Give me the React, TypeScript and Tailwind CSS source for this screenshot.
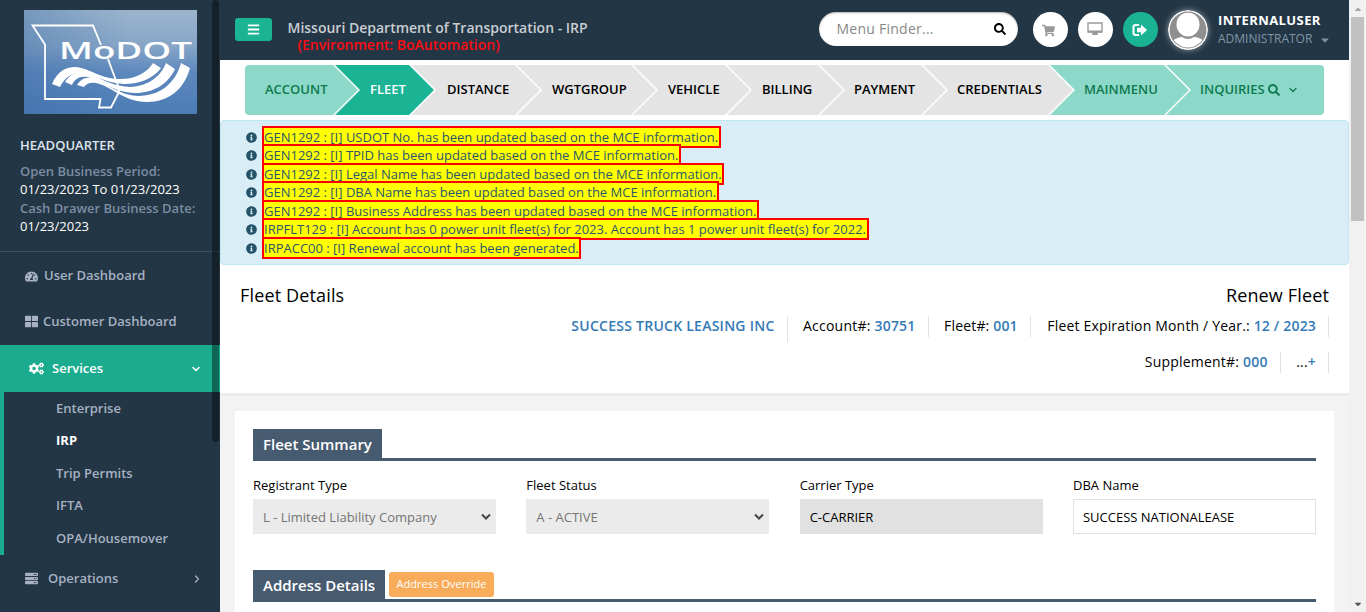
import React from "react";
import { FaTachometerAlt, FaThLarge, FaCogs, FaServer, FaBars, FaSearch, FaShoppingCart, FaInfoCircle, FaCaretDown, FaCaretUp } from "react-icons/fa";
import { ChevronDown, ChevronRight } from "lucide-react";

const steps = [
  { label: "ACCOUNT", w: "w-[113px]", tone: "bg-[#8dd9c9] text-[#0d7a4f]", pad: "pl-5", first: true },
  { label: "FLEET", w: "w-[99px]", tone: "bg-[#1ab394] text-white font-bold", pad: "pl-[35px]" },
  { label: "DISTANCE", w: "w-[129px]", tone: "bg-[#e4e4e4] text-black", pad: "pl-[36px]" },
  { label: "WGTGROUP", w: "w-[139px]", tone: "bg-[#e4e4e4] text-black", pad: "pl-[35px]" },
  { label: "VEHICLE", w: "w-[117px]", tone: "bg-[#e4e4e4] text-black", pad: "pl-[35px]" },
  { label: "BILLING", w: "w-[116px]", tone: "bg-[#e4e4e4] text-black", pad: "pl-[35px]" },
  { label: "PAYMENT", w: "w-[126px]", tone: "bg-[#e4e4e4] text-black", pad: "pl-[34px]" },
  { label: "CREDENTIALS", w: "w-[150px]", tone: "bg-[#e4e4e4] text-black", pad: "pl-[34px]" },
  { label: "MAINMENU", w: "w-[139px]", tone: "bg-[#8dd9c9] text-[#0d7a4f]", pad: "pl-[34px]" },
  { label: "INQUIRIES", w: "w-[158px]", tone: "bg-[#8dd9c9] text-[#0d7a4f]", pad: "pl-[34px]", last: true },
];

const messages = [
  { text: "GEN1292 : [I] USDOT No. has been updated based on the MCE information.", w: "w-[459px]" },
  { text: "GEN1292 : [I] TPID has been updated based on the MCE information.", w: "w-[419px]" },
  { text: "GEN1292 : [I] Legal Name has been updated based on the MCE information.", w: "w-[462px]" },
  { text: "GEN1292 : [I] DBA Name has been updated based on the MCE information.", w: "w-[457px]" },
  { text: "GEN1292 : [I] Business Address has been updated based on the MCE information.", w: "w-[497px]" },
  { text: "IRPFLT129 : [I] Account has 0 power unit fleet(s) for 2023. Account has 1 power unit fleet(s) for 2022.", w: "w-[607px]" },
  { text: "IRPACC00 : [I] Renewal account has been generated.", w: "w-[319px]" },
];

function Logo() {
  return (
    <svg width="173" height="104" viewBox="0 0 173 104" className="block">
      <defs>
        <linearGradient id="sky" x1="0" y1="0" x2="0" y2="1">
          <stop offset="0" stopColor="#9cb5cd" />
          <stop offset="0.35" stopColor="#86a5c7" />
          <stop offset="0.6" stopColor="#5d88bd" />
          <stop offset="1" stopColor="#4c7cb6" />
        </linearGradient>
        <linearGradient id="shade" x1="0" y1="0" x2="1" y2="0">
          <stop offset="0" stopColor="#3c6ca5" stopOpacity="0.4" />
          <stop offset="0.6" stopColor="#3c6ca5" stopOpacity="0" />
        </linearGradient>
      </defs>
      <rect width="173" height="104" fill="url(#sky)" />
      <rect width="173" height="104" fill="url(#shade)" />
      <path d="M77 35 L69 15.500 H8.500 L21 34.500 V89 H76.500 L75 97.500 H87 L95 82 L94 76 L84 49" fill="none" stroke="#fff" strokeWidth="1.800" />
      <g fill="#fff">
        <path d="M28 74 C34 60 43 57 51 57 C66 58 76 69 96 69 C114 69 124 61 129 53 L137 58 C128 70 114 74 100 74 C80 73 70 64 57 63 C46 63 40 69 36 77 Z" />
        <path d="M41 72 C46 64 52 61 62 63 C76 67 86 76 106 77 C125 76 137 66 142 53 L151 59 C144 74 130 83 111 83 C89 82 78 71 63 67 C55 66 51 69 48 75 Z" />
        <path d="M53 75 C57 69 62 66 70 69 C84 74 95 85 114 86 C137 86 152 72 157 53 L166 58 C160 80 144 92 123 92 C100 92 87 76 72 73 C66 72 62 74 60 77 Z" />
      </g>
      <text x="35" y="49" fontFamily="Open Sans, sans-serif" fontSize="24" fill="#fff" textLength="133" lengthAdjust="spacingAndGlyphs">MoDOT</text>
    </svg>
  );
}

function Step({ s }: { s: (typeof steps)[number] }) {
  const shape = s.first
    ? "rounded-l-[4px] [clip-path:polygon(0_0,calc(100%-25px)_0,100%_50%,calc(100%-25px)_100%,0_100%)]"
    : s.last
      ? "-ml-[23px] rounded-r-[4px] [clip-path:polygon(0_0,100%_0,100%_100%,0_100%,25px_50%)]"
      : "-ml-[23px] [clip-path:polygon(0_0,calc(100%-25px)_0,100%_50%,calc(100%-25px)_100%,0_100%,25px_50%)]";
  return (
    <div className={`flex h-[50px] shrink-0 items-center whitespace-nowrap text-[13px] font-semibold ${s.w} ${s.tone} ${s.pad} ${shape}`}>
      {s.label}
      {s.last && <><FaSearch className="ml-[3px] size-3" /><ChevronDown className="ml-[7px] size-3" strokeWidth={2.5} /></>}
    </div>
  );
}

function Select({ label, value }: { label: string; value: string }) {
  return (
    <div>
      <div className="h-[28px] leading-[28px]">{label}</div>
      <div className="flex h-[35px] items-center justify-between bg-[#ebebeb] pr-[5px] pl-[10px] text-[#757575]">
        <span className="pt-[2px]">{value}</span>
        <svg width="10" height="8" viewBox="0 0 10 8"><path d="M1 1.500 L5 5.500 L9 1.500" fill="none" stroke="#444" strokeWidth="2" /></svg>
      </div>
    </div>
  );
}

function Sidebar() {
  return (
    <aside className="relative h-[612px] w-[220px] shrink-0 overflow-hidden bg-[#233645] text-[13px] font-semibold text-[#a7b1c2]">
      <div className="h-[251px] pt-[10px]">
        <div className="pl-6"><Logo /></div>
        <div className="pt-[21px] pl-5 whitespace-nowrap">
          <div className="h-[26px] leading-[20px] text-[#dfe4ed]">HEADQUARTER</div>
          <div className="h-[18px] leading-[20px] text-[#7c8da4]">Open Business Period:</div>
          <div className="h-[19px] leading-[21px] font-medium text-white">01/23/2023 To 01/23/2023</div>
          <div className="h-[18px] leading-[21px] text-[#7c8da4]">Cash Drawer Business Date:</div>
          <div className="h-[19px] leading-[21px] font-medium text-white">01/23/2023</div>
        </div>
      </div>
      <div className="flex h-[47px] items-center border-t border-[#3b4e5d] pt-[2px] pl-[25px]"><FaTachometerAlt className="size-[13px]" /><span className="ml-[6px]">User Dashboard</span></div>
      <div className="flex h-[47px] items-center pl-[25px]"><FaThLarge className="size-[13px]" /><span className="ml-[5px]">Customer Dashboard</span></div>
      <div className="flex h-[47px] items-center bg-[#1bab8e] pr-[18px] pl-[29px] text-white"><FaCogs className="size-[15px]" /><span className="ml-2 grow">Services</span><ChevronDown className="size-3" strokeWidth={3} /></div>
      <div className="h-[163px] border-l-4 border-[#1bab8e] pl-[52px]">
        <div className="h-[32px] leading-[32px]">Enterprise</div>
        <div className="h-[33px] leading-[32px] font-bold text-white">IRP</div>
        <div className="h-[32px] leading-[32px]">Trip Permits</div>
        <div className="h-[33px] leading-[32px]">IFTA</div>
        <div className="h-[33px] leading-[32px]">OPA/Housemover</div>
      </div>
      <div className="flex h-[47px] items-center pr-[17px] pl-[25px]"><FaServer className="size-[13px]" /><span className="ml-[10px] grow">Operations</span><ChevronRight className="size-3" strokeWidth={2.5} /></div>
      <div className="absolute top-0 left-[212px] h-[442px] w-[7px] rounded-[4px] bg-black/40" />
    </aside>
  );
}

function Header() {
  return (
    <header className="flex h-[60px] bg-[#233645]">
      <div className="mt-[18px] ml-[15px] flex h-[23px] w-[37px] items-center justify-center rounded-[3px] bg-[#1ab394] text-white"><FaBars className="size-[13px]" /></div>
      <div className="mt-[19px] ml-[15.500px] w-[531px] text-[14px] leading-[17px] font-semibold whitespace-nowrap text-[#c9cdd1]">
        <div>Missouri Department of Transportation - IRP</div>
        <div className="pl-[10px] text-[#fb0b12]">(Environment: BoAutomation)</div>
      </div>
      <div className="mt-3 flex h-[34px] w-[199px] items-center justify-between rounded-full bg-white pr-3 pl-[18px] text-[14px] text-[#888] shadow-[inset_0_1px_2px_rgba(0,0,0,0.3)]"><span className="pb-px tracking-[0.25px]">Menu Finder...</span><FaSearch className="size-[12px] text-black" /></div>
      <div className="mt-3 ml-[15px] flex size-[35px] items-center justify-center rounded-full bg-white text-[#999]"><FaShoppingCart className="mr-[3px] mt-px size-[13px]" /></div>
      <div className="mt-3 ml-[10px] flex size-[35px] items-center justify-center rounded-full bg-white">
        <svg className="mb-px" width="16" height="14" viewBox="0 0 16 14"><path d="M1 1h14v9H1z" fill="none" stroke="#999" strokeWidth="1.400" /><path d="M1 8.500h14v2H1zM6 10h4l1 3H5z" fill="#999" /></svg>
      </div>
      <div className="mt-3 ml-[10px] flex size-[35px] items-center justify-center rounded-full bg-[#1ab394]">
        <svg width="16" height="14" viewBox="0 0 16 14"><path d="M7 2H3.500Q1.500 2 1.500 4v6q0 2 2 2H7" fill="none" stroke="#fff" strokeWidth="2" /><path d="M5 4.800h4V1.500L15 7 9 12.500V9.200H5z" fill="#fff" /></svg>
      </div>
      <svg className="mt-[10px] ml-[10px] rounded-full shadow-[0_0_6px_rgba(255,255,255,0.5)]" width="40" height="40" viewBox="0 0 40 40">
        <defs><clipPath id="face"><circle cx="20" cy="20" r="17.500" /></clipPath></defs>
        <circle cx="20" cy="20" r="20" fill="#fff" /><circle cx="20" cy="20" r="18.500" fill="#8f8f8f" />
        <g clipPath="url(#face)" fill="#fff"><ellipse cx="20" cy="14.500" rx="11.500" ry="12" /><path d="M4 40V31q6-4 10-4 6 4 12 0 5 0 10 4v9z" /></g>
      </svg>
      <div className="ml-[10.500px] pt-[10px] text-[13px] leading-[19px] whitespace-nowrap">
        <div className="pt-px leading-[18px] font-bold tracking-[0.4px] text-white">INTERNALUSER</div>
        <div className="flex items-center text-[12px] text-[#8095a8]">ADMINISTRATOR<FaCaretDown className="mt-[3px] ml-[7px] size-3" /></div>
      </div>
    </header>
  );
}

export default function App() {
  return (
    <div className="flex h-[612px] w-[1366px] overflow-hidden bg-[#f3f3f4] font-['Open_Sans',sans-serif]">
      <Sidebar />
      <main className="h-[612px] w-[1129px] shrink-0 overflow-hidden">
        <Header />
        <div className="h-[336px] border-b-[3px] border-[#ececec] bg-white">
          <nav className="flex h-[60px] pt-[5px] pl-[25px]">{steps.map((s) => <Step key={s.label} s={s} />)}</nav>
          <section className="h-[145px] rounded-[4px] border border-[#bce8f1] bg-[#d9edf7] pt-[5px] pl-[25px] text-[13px] text-[#2b566e]">
            {messages.map((m) => (
              <div key={m.text} className="flex h-[18.450px] items-start">
                <FaInfoCircle className="mt-[6px] mr-[5px] size-[11px] shrink-0 text-[#245269]" />
                <span className={`relative h-[22px] shrink-0 border-2 border-[#f00] bg-[#ff0] leading-[19px] font-normal whitespace-nowrap ${m.w}`}>{m.text}</span>
              </div>
            ))}
          </section>
          <div className="flex h-[50px] items-end justify-between px-5 pb-[8px] text-[18px] leading-[24px] font-medium tracking-[0.15px] text-black"><h1>Fleet Details</h1><h2>Renew Fleet</h2></div>
          <div className="flex h-[36px] justify-end pr-5 text-[14px] leading-[19px] tracking-[0.2px] whitespace-nowrap text-black">
            <div className="mt-[2px] h-[25px] border-r border-[#e1e1e1] pr-[12.500px] leading-[17px] font-semibold tracking-[0.25px] text-[#337ab7]">SUCCESS TRUCK LEASING INC</div>
            <div className="mt-px h-[21px] border-r border-[#e1e1e1] pr-[12.500px] pl-[15px] tracking-[0.22px]">Account#: <b className="font-semibold text-[#337ab7]">30751</b></div>
            <div className="mt-px h-[21px] border-r border-[#e1e1e1] pr-[12.500px] pl-[15px] tracking-[0.17px]">Fleet#: <b className="font-semibold text-[#337ab7]">001</b></div>
            <div className="mt-px h-[21px] border-r border-[#e1e1e1] pr-[12px] pl-[16px] tracking-[0.175px]">Fleet Expiration Month / Year.: <b className="font-semibold text-[#337ab7]">12 / 2023</b></div>
          </div>
          <div className="flex justify-end pr-5 text-[14px] leading-[19px] tracking-[0.2px] text-black">
            <div className="mt-px h-[21px] border-r border-[#e1e1e1] pr-[12.500px]">Supplement#: <b className="font-semibold text-[#337ab7]">000</b></div>
            <div className="mt-px h-[21px] border-r border-[#e1e1e1] pr-[12px] pl-[15px]">...<b className="font-semibold text-[#337ab7]">+</b></div>
          </div>
        </div>
        <div className="mt-[15px] ml-[15px] h-[201px] w-[1099px] bg-white px-[18px] pt-[18px] text-[13px] text-black">
          <div className="flex h-[32px] border-b-[3px] border-[#475b70]"><h3 className="w-[129px] bg-[#475b70] pl-[10px] text-[15px] leading-[31px] font-semibold whitespace-nowrap text-white">Fleet Summary</h3></div>
          <div className="mt-[10px] grid grid-cols-4 gap-x-[30.300px]">
            <Select label="Registrant Type" value="L - Limited Liability Company" />
            <Select label="Fleet Status" value="A - ACTIVE" />
            <div><div className="h-[28px] leading-[28px]">Carrier Type</div><div className="h-[35px] bg-[#e1e1e1] pl-[10px] leading-[36px]">C-CARRIER</div></div>
            <div><div className="h-[28px] leading-[28px]">DBA Name</div><div className="h-[35px] border border-[#e1e1e1] pl-[9px] leading-[34px]">SUCCESS NATIONALEASE</div></div>
          </div>
          <div className="mt-[36px] flex h-[32px] border-b-[3px] border-[#475b70]"><h3 className="w-[132px] bg-[#475b70] pl-[10px] text-[15px] leading-[31px] font-semibold whitespace-nowrap text-white">Address Details</h3><div className="mt-[2px] ml-1 h-[25px] w-[105px] rounded-[3px] bg-[#f8ac59] text-center text-[11px] leading-[24px] font-medium tracking-[0.05px] whitespace-nowrap text-white">Address Override</div></div>
        </div>
      </main>
      <div className="flex h-[612px] w-[17px] flex-col items-center bg-[#f1f1f1] text-[#505050]">
        <div className="flex h-[17px] items-center text-[#a3a3a3]"><FaCaretUp className="size-[10px]" /></div>
        <div className="h-[204px] w-[13px] bg-[#c1c1c1]" />
        <div className="grow" />
        <div className="flex h-[17px] items-center"><FaCaretDown className="size-[10px]" /></div>
      </div>
    </div>
  );
}
